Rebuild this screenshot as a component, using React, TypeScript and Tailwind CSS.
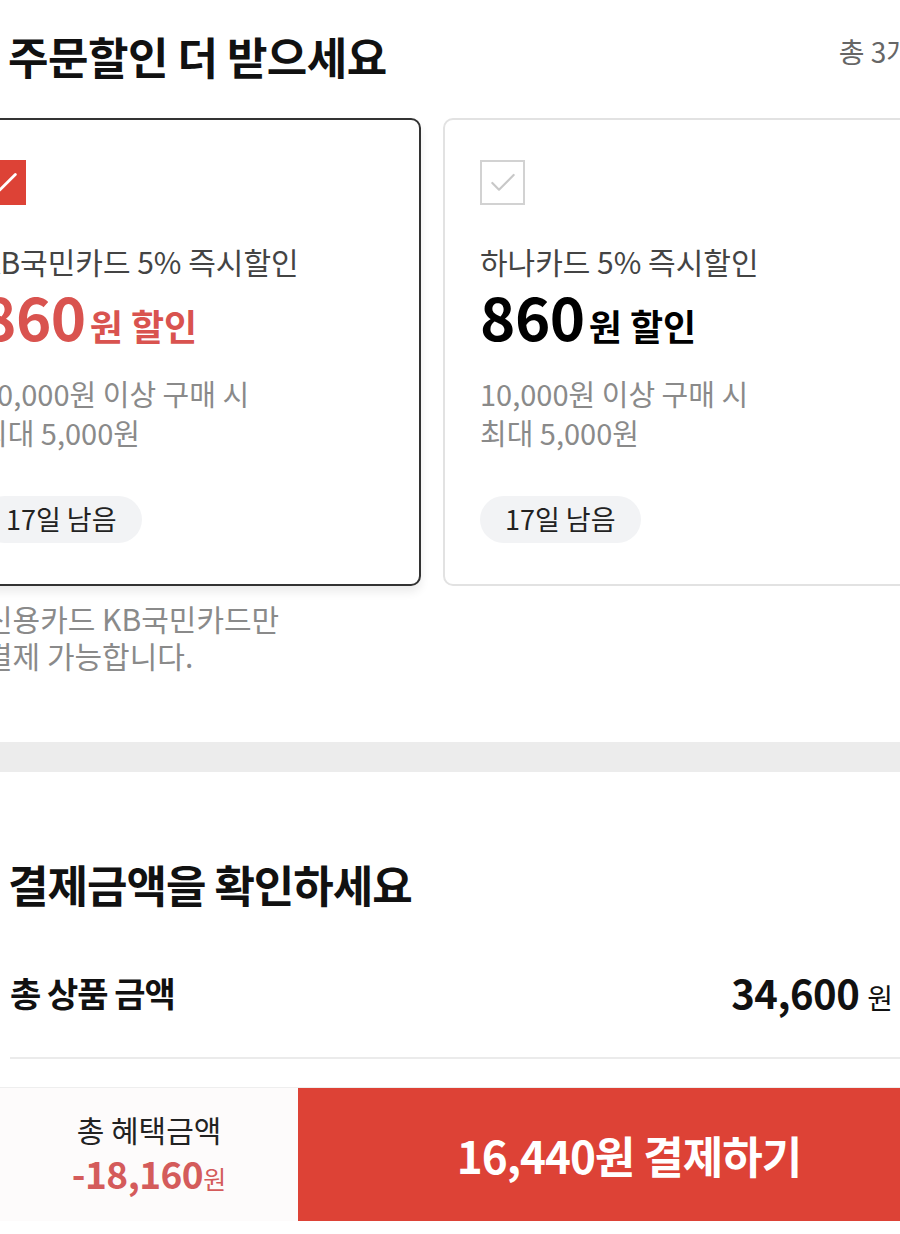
import { Check } from "lucide-react";

const font = { fontFamily: '"Noto Sans CJK KR", "Noto Sans", sans-serif' };

interface Coupon {
  name: string,
  amount: string,
  minimum: string,
  max: string,
  days: string,
  selected: boolean
}

const coupons: Coupon[] = [
  { name: "KB국민카드 5% 즉시할인", amount: "860", minimum: "10,000원 이상 구매 시", max: "최대 5,000원", days: "17일 남음", selected: true },
  { name: "하나카드 5% 즉시할인", amount: "860", minimum: "10,000원 이상 구매 시", max: "최대 5,000원", days: "17일 남음", selected: false },
];

function CouponCard({ c }: { c: Coupon }) {
  return (
    <div
      className={
        c.selected
          ? "w-[477px] h-[468px] shrink-0 rounded-[10px] border-2 border-[#333] bg-white shadow-[0_6px_10px_rgba(0,0,0,0.08)] px-[35px] pt-[40px]"
          : "w-[477px] h-[468px] shrink-0 rounded-[10px] border-2 border-[#e2e2e2] bg-white px-[35px] pt-[40px]"
      }
    >
      {/* checkbox */}
      {c.selected ? (
        <div className="w-[45px] h-[45px] bg-[#dd4236] flex items-center justify-center">
          <Check className="w-[34px] h-[34px] text-white" strokeWidth={2} />
        </div>
      ) : (
        <div className="w-[45px] h-[45px] border-2 border-[#d2d2d2] flex items-center justify-center">
          <Check className="w-[32px] h-[32px] text-[#c8c8c8]" strokeWidth={1.6} />
        </div>
      )}

      <div className="mt-[36px] text-[30px] leading-[40px] text-[#444]">{c.name}</div>
      <div className={c.selected ? "mt-[2px] flex items-baseline font-bold text-[#d9534f]" : "mt-[2px] flex items-baseline font-bold text-black"}>
        <span className="text-[60px] leading-[64px] tracking-[-0.5px]">{c.amount}</span>
        <span className="ml-[4px] text-[36px]">원 할인</span>
      </div>

      <div className="mt-[22px] text-[29px] leading-[39px] text-[#8a8a8a]">
        <div>{c.minimum}</div>
        <div>{c.max}</div>
      </div>

      <div className="mt-[44px] inline-flex h-[47px] items-center rounded-full bg-[#f2f3f5] px-[25px] text-[27px] text-[#222]">
        {c.days}
      </div>
    </div>
  );
}

export default function App() {
  return (
    <div className="w-[900px] h-[1234px] overflow-hidden bg-white flex flex-col" style={font}>
      {/* Coupon section */}
      <div className="flex items-center pl-[8px] pt-[12px] h-[100px]">
        <h1 className="text-[44px] leading-[60px] font-bold text-[#111] tracking-[-0.5px]">주문할인 더 받으세요</h1>
        <span className="ml-auto mr-[-12px] mb-[10px] text-[28px] text-[#666]">총 3개</span>
      </div>

      <div className="mt-[18px] ml-[-56px] flex gap-[22px]">
        {coupons.map((c) => (
          <CouponCard key={c.name} c={c} />
        ))}
      </div>

      <div className="mt-[14px] ml-[-15px] text-[30px] leading-[37px] text-[#8a8a8a]">
        <div>신용카드 KB국민카드만</div>
        <div>결제 가능합니다.</div>
      </div>

      {/* divider band */}
      <div className="mt-[68px] h-[30px] bg-[#ececec]" />

      {/* Payment section */}
      <div className="pl-[8px] pt-[82px]">
        <h2 className="text-[44px] leading-[60px] font-bold text-[#111] tracking-[-1px]">결제금액을 확인하세요</h2>
      </div>

      <div className="mt-[54px] flex items-center justify-between pl-[10px] pr-[7px]">
        <span className="text-[34px] leading-[48px] font-bold text-[#111] tracking-[-1px]">총 상품 금액</span>
        <span className="flex items-baseline text-[#111]">
          <span className="text-[40px] leading-[48px] font-bold tracking-[-0.5px]">34,600</span>
          <span className="ml-[8px] text-[28px]">원</span>
        </span>
      </div>

      <div className="mt-[39px] ml-[10px] h-[2px] bg-[#ebebeb]" />

      {/* bottom bar */}
      <div className="mt-[28px] flex h-[134px] border-t border-[#eeeeee]">
        <div className="w-[298px] bg-[#fdfbfb] flex flex-col items-center justify-center gap-[6px]">
          <span className="text-[30px] leading-[36px] text-[#222]">총 혜택금액</span>
          <span className="flex items-baseline text-[#d45b5b]">
            <span className="text-[37px] leading-[40px] font-bold tracking-[-0.5px]">-18,160</span>
            <span className="text-[25px]">원</span>
          </span>
        </div>
        <button className="flex-1 bg-[#dd4236] pl-[60px] text-white text-[44px] font-bold tracking-[-1px] flex items-center justify-center">
          16,440원 결제하기
        </button>
      </div>
    </div>
  );
}
